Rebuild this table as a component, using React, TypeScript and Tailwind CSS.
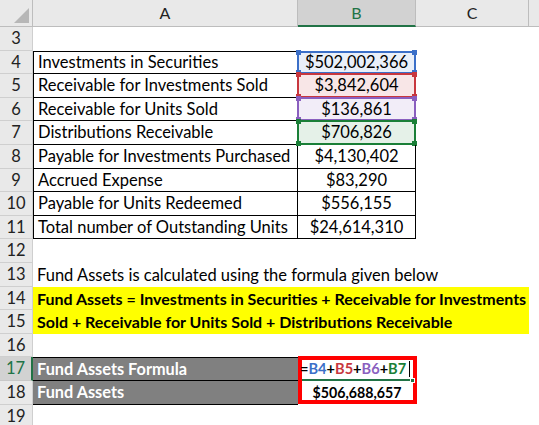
import React from "react";

type Range = "blue" | "red" | "purple" | "green";

const rangeStyles: Record<Range, { line: string; tint: string; dot: string }> = {
	blue: { line: "border-[#3b6fc8]", tint: "bg-[#e9eff9]", dot: "bg-[#3b6fc8]" },
	red: { line: "border-[#c8373e]", tint: "bg-[#f8e6e7]", dot: "bg-[#c8373e]" },
	purple: { line: "border-[#8a5fbf]", tint: "bg-[#f2edf8]", dot: "bg-[#8a5fbf]" },
	green: { line: "border-[#1a7f37]", tint: "bg-[#e5f1e8]", dot: "bg-[#1a7f37]" },
};

const tableRows: { n: number; h: string; label: string; value: string; range?: Range }[] = [
	{ n: 4, h: "h-[23px]", label: "Investments in Securities", value: "$502,002,366", range: "blue" },
	{ n: 5, h: "h-[24px]", label: "Receivable for Investments Sold", value: "$3,842,604", range: "red" },
	{ n: 6, h: "h-[23px]", label: "Receivable for Units Sold", value: "$136,861", range: "purple" },
	{ n: 7, h: "h-[24px]", label: "Distributions Receivable", value: "$706,826", range: "green" },
	{ n: 8, h: "h-[24px]", label: "Payable for Investments Purchased", value: "$4,130,402" },
	{ n: 9, h: "h-[23px]", label: "Accrued Expense", value: "$83,290" },
	{ n: 10, h: "h-[24px]", label: "Payable for Units Redeemed", value: "$556,155" },
	{ n: 11, h: "h-[23px]", label: "Total number of Outstanding Units", value: "$24,614,310" },
];

const cols = "grid grid-cols-[33px_265px_118px_113px_1fr]";

function RowHead({ n, active }: { n: number; active?: boolean }) {
	return (
		<div
			className={
				active
					? "flex items-center justify-center border-b border-r-2 border-b-[#c8c8c8] border-r-[#217346] bg-[#d2d2d2] text-[#217346]"
					: "flex items-center justify-center border-b border-r border-[#cfcfcf] bg-[#e9e9e9] text-[#222]"
			}
		>
			{n}
		</div>
	);
}

function Corners({ dot }: { dot: string }) {
	return (
		<>
			<span className={`absolute -left-[3px] -top-[3px] h-[5px] w-[5px] ${dot}`} />
			<span className={`absolute -right-[3px] -top-[3px] h-[5px] w-[5px] ${dot}`} />
			<span className={`absolute -bottom-[3px] -left-[3px] h-[5px] w-[5px] ${dot}`} />
			<span className={`absolute -bottom-[3px] -right-[3px] h-[5px] w-[5px] ${dot}`} />
		</>
	);
}

export default function App() {
	return (
		<div className="h-[425px] w-[539px] overflow-hidden bg-white text-[16.5px] leading-none text-black [font-family:Lato,'Open_Sans',sans-serif]">
			{/* Column headers */}
			<div className={`${cols} h-[27px] bg-[#e9e9e9] text-[16px] text-[#222]`}>
				<div className="relative border-b border-r border-[#bdbdbd]">
					<span className="absolute bottom-[3px] right-[3px] h-0 w-0 border-b-[15px] border-l-[15px] border-b-[#b7b7b7] border-l-transparent" />
				</div>
				<div className="flex items-center justify-center border-b border-r border-[#bdbdbd]">A</div>
				<div className="flex items-center justify-center border-b-2 border-r border-b-[#217346] border-r-[#bdbdbd] bg-[#d2d2d2] pt-[1px] text-[#217346]">
					B
				</div>
				<div className="flex items-center justify-center border-b border-r border-[#bdbdbd]">C</div>
				<div className="border-b border-[#bdbdbd]" />
			</div>

			{/* Row 3 */}
			<div className={`${cols} h-[24px]`}>
				<RowHead n={3} />
			</div>

			{/* Data table */}
			{tableRows.map((r, i) => {
				const rs = r.range ? rangeStyles[r.range] : undefined;
				return (
					<div key={r.n} className={`${cols} ${r.h}`}>
						<RowHead n={r.n} />
						<div
							className={`flex items-center border-x border-b border-black pl-[4px] ${i === 0 ? "border-t" : ""}`}
						>
							{r.label}
						</div>
						<div
							className={`relative flex items-center justify-center border-b border-r border-black ${i === 0 ? "border-t" : ""} ${rs ? rs.tint : ""}`}
						>
							{r.value}
							{rs && (
								<div className={`absolute -left-px -top-px -bottom-px -right-px border-2 ${rs.line}`}>
									<Corners dot={rs.dot} />
								</div>
							)}
						</div>
					</div>
				);
			})}

			{/* Row 12 */}
			<div className={`${cols} h-[24px]`}>
				<RowHead n={12} />
			</div>

			{/* Row 13 */}
			<div className={`${cols} h-[24px]`}>
				<RowHead n={13} />
				<div className="col-span-3 flex items-center pl-[4px]">
					Fund Assets is calculated using the formula given below
				</div>
			</div>

			{/* Rows 14-15 */}
			<div className={`${cols} h-[23px]`}>
				<RowHead n={14} />
				<div className="col-span-3 flex items-center bg-[#ffff00] pl-[4px] text-[16px] font-bold">
					Fund Assets = Investments in Securities + Receivable for Investments
				</div>
			</div>
			<div className={`${cols} h-[24px]`}>
				<RowHead n={15} />
				<div className="col-span-3 flex items-center bg-[#ffff00] pl-[4px] text-[16px] font-bold">
					Sold + Receivable for Units Sold + Distributions Receivable
				</div>
			</div>

			{/* Row 16 */}
			<div className={`${cols} h-[23px]`}>
				<RowHead n={16} />
			</div>

			{/* Row 17 */}
			<div className={`${cols} h-[24px]`}>
				<RowHead n={17} active />
				<div className="flex items-center border-y border-black bg-[#808080] pl-[4px] text-[16.3px] font-bold text-white">
					Fund Assets Formula
				</div>
				<div className="relative flex items-center pl-[2px] text-[14.6px] font-bold">
					<span className="absolute -top-px left-0 h-[48px] w-[119px] border-4 border-[#ff0000]" />
					<span className="relative">=</span>
					<span className="relative text-[#3b6fc8]">B4</span>
					<span className="relative">+</span>
					<span className="relative text-[#c8373e]">B5</span>
					<span className="relative">+</span>
					<span className="relative text-[#8a5fbf]">B6</span>
					<span className="relative">+</span>
					<span className="relative text-[#1a7f37]">B7</span>
					<span className="relative ml-[3px] h-[16px] w-px bg-black" />
					<span className="absolute bottom-0 left-[4px] h-[2px] w-[109px] bg-[#217346]" />
					<span className="absolute -bottom-[2px] left-[112px] h-[5px] w-[5px] border border-white bg-[#217346]" />
				</div>
			</div>

			{/* Row 18 */}
			<div className={`${cols} h-[24px]`}>
				<RowHead n={18} />
				<div className="flex items-center border-b border-black bg-[#808080] pl-[4px] text-[16.3px] font-bold text-white">
					Fund Assets
				</div>
				<div className="flex items-center justify-center pt-[1px] text-[14.2px] font-bold">$506,688,657</div>
			</div>

			{/* Row 19 */}
			<div className={`${cols} h-[23px]`}>
				<RowHead n={19} />
			</div>
		</div>
	);
}
